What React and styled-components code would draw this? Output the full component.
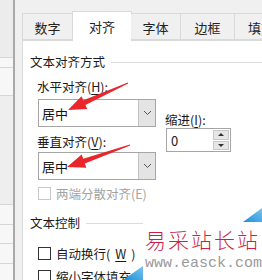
import React from "react";
import styled, { createGlobalStyle } from "styled-components";

const Global = createGlobalStyle`
  html, body { margin: 0; padding: 0; background: #f0f0f0; }
  body {
    font-family: "Noto Sans CJK SC", "Noto Sans", sans-serif;
    font-size: 12.5px;
    color: #1a1a1a;
  }
`;

const Screen = styled.div`
  position: relative;
  width: 262px;
  height: 280px;
  overflow: hidden;
  display: flex;
`;

const Sheet = styled.div`
  width: 13px;
  display: flex;
  flex-direction: column;
  background: #f7f7f7;
`;

const SheetRow = styled.div`
  height: ${(p) => p.h}px;
  flex-shrink: 0;
  background: ${(p) => p.bg || "#f7f7f7"};
  border-bottom: 1px solid #d6d6d6;
`;

const Edge = styled.div`
  width: 2px;
  background: #a9a9a9;
`;

const Dialog = styled.div`
  flex: 1;
  display: flex;
  flex-direction: column;
  padding: 11px 0 0 7px;
  background: #f0f0f0;
  min-width: 0;
`;

const Tabs = styled.div`
  display: flex;
  align-items: flex-end;
  height: 29px;
  position: relative;
  z-index: 1;
`;

const Tab = styled.div`
  flex-shrink: 0;
  width: ${(p) => p.w}px;
  height: ${(p) => (p.active ? 30 : 27)}px;
  margin: ${(p) => (p.active ? "0 -1px -1px" : "0")};
  box-sizing: border-box;
  display: flex;
  align-items: center;
  padding-top: ${(p) => (p.active ? 0 : 1)}px;
  background: ${(p) => (p.active ? "#ffffff" : "#f0f0f0")};
  border: 1px solid #d9d9d9;
  border-bottom: ${(p) => (p.active ? "none" : "1px solid #d9d9d9")};
  border-left: ${(p) => (p.first || p.active ? "1px solid #d9d9d9" : "none")};
  font-size: 13px;
  color: #222;
  white-space: nowrap;
  overflow: hidden;
  justify-content: ${(p) => (p.cut ? "flex-start" : "center")};
  padding-left: ${(p) => (p.cut ? 13 : 0)}px;
`;

const Panel = styled.div`
  flex: 1;
  background: #ffffff;
  border-left: 1px solid #d9d9d9;
  border-top: 1px solid #d9d9d9;
  padding: 13px 0 0 7px;
  display: flex;
  flex-direction: column;
`;

const GroupTitle = styled.div`
  display: flex;
  align-items: center;
  gap: 6px;
  height: 16px;
  line-height: 16px;
  font-size: 12.5px;
  color: #1a1a1a;
  white-space: nowrap;
  &::after {
    content: "";
    flex: 1;
    height: 1px;
    background: #dcdcdc;
  }
`;

const Fields = styled.div`
  display: flex;
  gap: 10px;
  padding: 9px 0 0 8px;
`;

const Column = styled.div`
  display: flex;
  flex-direction: column;
  padding-top: ${(p) => p.top || 0}px;
`;

const Label = styled.div`
  height: ${(p) => p.h || 16}px;
  line-height: ${(p) => p.h || 16}px;
  font-size: 12.5px;
  white-space: nowrap;
  margin-bottom: ${(p) => p.mb || 0}px;
  margin-left: -1px;
  u { text-decoration: underline; text-underline-offset: 2px; }
`;

const Select = styled.div`
  width: 118px;
  height: 28px;
  box-sizing: border-box;
  border: 1px solid #a6a6a6;
  background: #fff;
  display: flex;
  margin-bottom: ${(p) => p.mb || 0}px;
`;

const SelectValue = styled.div`
  flex: 1;
  padding-left: 3px;
  display: flex;
  align-items: center;
  font-size: 13px;
  color: #111;
`;

const SelectButton = styled.div`
  width: 16px;
  background: #e4e4e4;
  border-left: 1px solid #c2c2c2;
  display: flex;
  align-items: center;
  justify-content: center;
`;

const Spin = styled.div`
  width: 65px;
  height: 24px;
  margin-top: 1px;
  box-sizing: border-box;
  border: 1px solid #a6a6a6;
  background: #fff;
  display: flex;
`;

const SpinValue = styled.div`
  flex: 1;
  padding-left: 4px;
  display: flex;
  align-items: center;
  font-size: 13px;
`;

const SpinButtons = styled.div`
  width: 16px;
  display: flex;
  flex-direction: column;
  gap: 1px;
  padding: 1px 1px 1px 0;
`;

const SpinButton = styled.div`
  flex: 1;
  background: #e6e6e6;
  border: 1px solid #c9c9c9;
  display: flex;
  align-items: center;
  justify-content: center;
  &::before {
    content: "";
    border-left: 3px solid transparent;
    border-right: 3px solid transparent;
    ${(p) => (p.down ? "border-top: 3px solid #333;" : "border-bottom: 3px solid #333;")}
  }
`;

const Check = styled.div`
  display: flex;
  align-items: center;
  gap: 5px;
  height: 16px;
  padding-left: 8px;
  margin-top: ${(p) => p.mt || 0}px;
  font-size: 12.5px;
  color: ${(p) => (p.disabled ? "#a3a3a3" : "#1a1a1a")};
  white-space: nowrap;
  u { text-decoration: underline; text-underline-offset: 2px; }
  &::before {
    content: "";
    width: 13px;
    height: 13px;
    box-sizing: border-box;
    flex-shrink: 0;
    background: #fff;
    border: 1px solid ${(p) => (p.disabled ? "#c8c8c8" : "#333")};
  }
`;

const Spacer = styled.div`
  height: ${(p) => p.h}px;
  flex-shrink: 0;
`;

const Arrows = styled.svg`
  position: absolute;
  left: 0;
  top: 0;
  pointer-events: none;
`;

const Watermark = styled.div`
  position: absolute;
  left: 123px;
  top: 206px;
  width: 139px;
  height: 74px;
`;

const MarkCorners = styled.svg`
  position: absolute;
  left: 0;
  top: 0;
`;

const MarkBody = styled.div`
  position: absolute;
  left: 20px;
  top: 16px;
  right: 0;
  bottom: 0;
  background: #fff;
  display: flex;
  flex-direction: column;
  padding: 4px 0 0 2px;
`;

const MarkTitle = styled.div`
  font-family: "Noto Sans CJK SC", serif;
  font-weight: 300;
  font-size: 21px;
  line-height: 26px;
  letter-spacing: 2px;
  color: #cc1f45;
  white-space: nowrap;
`;

const MarkUrl = styled.div`
  font-family: "Liberation Mono", monospace;
  font-size: 15px;
  line-height: 18px;
  margin-top: 3px;
  color: #9a9a9a;
  white-space: nowrap;
`;

function Chevron() {
  return (
    <svg width="9" height="6" viewBox="0 0 9 6">
      <path d="M1 1l3.5 3.5L8 1" fill="none" stroke="#555" strokeWidth="1" />
    </svg>
  );
}

const sheetRows = [
  { h: 57, bg: "#ececec" },
  { h: 9, bg: "#f7f7f7" },
  { h: 27, bg: "#f7f7f7" },
  { h: 108, bg: "#eeeeee" },
  { h: 19 },
  { h: 18 },
  { h: 19 },
  { h: 19 },
  { h: 19 },
];

export default function App() {
  return (
    <>
      <Global />
      <Screen>
        <Sheet>
          {sheetRows.map((r, i) => (
            <SheetRow key={i} h={r.h} bg={r.bg} />
          ))}
        </Sheet>
        <Edge />
        <Dialog>
          <Tabs>
            <Tab w={51} first>数字</Tab>
            <Tab w={60} active>对齐</Tab>
            <Tab w={50}>字体</Tab>
            <Tab w={54}>边框</Tab>
            <Tab w={40} cut>填充</Tab>
          </Tabs>
          <Panel>
            <GroupTitle>文本对齐方式</GroupTitle>
            <Fields>
              <Column>
                <Label mb={4}>水平对齐(<u>H</u>):</Label>
                <Select mb={7}>
                  <SelectValue>居中</SelectValue>
                  <SelectButton><Chevron /></SelectButton>
                </Select>
                <Label mb={2}>垂直对齐(<u>V</u>):</Label>
                <Select>
                  <SelectValue>居中</SelectValue>
                  <SelectButton><Chevron /></SelectButton>
                </Select>
              </Column>
              <Column top={34}>
                <Label h={14}>缩进(<u>I</u>):</Label>
                <Spin>
                  <SpinValue>0</SpinValue>
                  <SpinButtons>
                    <SpinButton />
                    <SpinButton down />
                  </SpinButtons>
                </Spin>
              </Column>
            </Fields>
            <Check disabled mt={5}>两端分散对齐(E)</Check>
            <Spacer h={14} />
            <GroupTitle>文本控制</GroupTitle>
            <Check mt={14}>自动换行(<u>W</u>)</Check>
            <Check mt={7}>缩小字体填充</Check>
          </Panel>
        </Dialog>

        <Arrows width="262" height="280" viewBox="0 0 262 280">
          <polygon
            fill="#e8262b"
            points="127.8,82.5 83.4,100.3 81.5,96.2 68,110 87.3,109 85.4,104.9 128.2,83.5"
          />
          <polygon
            fill="#e8262b"
            points="129.8,144.5 83.2,158.7 81.7,154.5 67,167 86.3,167.7 84.8,163.5 130.2,145.5"
          />
        </Arrows>

        <Watermark>
          <MarkCorners width="139" height="74" viewBox="0 0 139 74">
            <defs>
              <linearGradient id="wm" x1="0" y1="1" x2="1" y2="0">
                <stop offset="0" stopColor="#1b8fd8" />
                <stop offset="1" stopColor="#7cc4ee" />
              </linearGradient>
            </defs>
            <polygon points="120,16 139,2 139,16" fill="url(#wm)" />
            <polygon points="0,74 20,60 20,74" fill="url(#wm)" />
          </MarkCorners>
          <MarkBody>
            <MarkTitle>易采站长站</MarkTitle>
            <MarkUrl>www.easck.com</MarkUrl>
          </MarkBody>
        </Watermark>
      </Screen>
    </>
  );
}
